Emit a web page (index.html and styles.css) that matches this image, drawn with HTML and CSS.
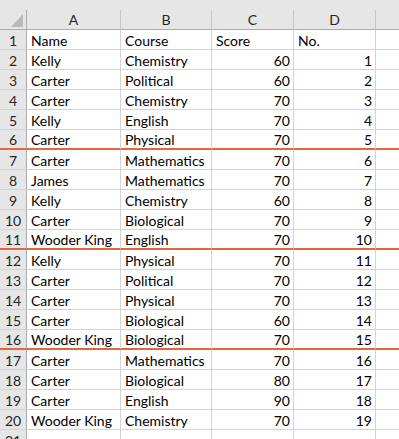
FILE: index.html
```html
<!DOCTYPE html>
<html>
<head>
<meta charset="utf-8">
<link rel="stylesheet" href="styles.css">
</head>
<body>
<div class="sheet">
  <div class="topbar"></div>
  <div class="grid">
    <div class="ch corner"><span class="tri"></span></div>
    <div class="ch">A</div>
    <div class="ch">B</div>
    <div class="ch">C</div>
    <div class="ch">D</div>
    <div class="ch last"></div>
  </div>
  <div id="rows"></div>
</div>
<script src="app.js"></script>
</body>
</html>
```

FILE: app.js
```js
const data = [
  ["Name","Course","Score","No."],
  ["Kelly","Chemistry",60,1],
  ["Carter","Political",60,2],
  ["Carter","Chemistry",70,3],
  ["Kelly","English",70,4],
  ["Carter","Physical",70,5],
  ["Carter","Mathematics",70,6],
  ["James","Mathematics",70,7],
  ["Kelly","Chemistry",60,8],
  ["Carter","Biological",70,9],
  ["Wooder King","English",70,10],
  ["Kelly","Physical",70,11],
  ["Carter","Political",70,12],
  ["Carter","Physical",70,13],
  ["Carter","Biological",60,14],
  ["Wooder King","Biological",70,15],
  ["Carter","Mathematics",70,16],
  ["Carter","Biological",80,17],
  ["Carter","English",90,18],
  ["Wooder King","Chemistry",70,19],
  ["","","",""]
];
const root = document.getElementById("rows");
data.forEach((r, i) => {
  const row = document.createElement("div");
  row.className = "grid row" + ([6,11,16].includes(i+1) ? " sep" : "");
  const cells = [String(i+1)].concat(r).concat([""]);
  cells.forEach((v, j) => {
    const c = document.createElement("div");
    let cls = "cell";
    if (j === 0) cls += " rh";
    else if (j === 5) cls += " last";
    else if (typeof v === "number") cls += " num";
    c.className = cls;
    c.textContent = v;
    row.appendChild(c);
  });
  root.appendChild(row);
});
```

FILE: styles.css
```css
html, body {
  margin: 0;
  padding: 0;
  background: #fff;
}
.sheet {
  width: 399px;
  height: 439px;
  overflow: hidden;
  font-family: "Lato", "Liberation Sans", sans-serif;
  font-size: 14px;
  color: #000;
}
.topbar {
  height: 10px;
  background: #e6e6e6;
}
.grid {
  display: grid;
  grid-template-columns: 27px 94px 91px 82px 82px 1fr;
}
.ch {
  height: 20px;
  box-sizing: border-box;
  background: #e6e6e6;
  border-right: 1px solid #c6c6c6;
  border-bottom: 1px solid #ababab;
  text-align: center;
  line-height: 20px;
  color: #262626;
  position: relative;
}
.ch.corner {
  border-right-color: #ababab;
}
.ch.last {
  border-right: none;
}
.tri {
  position: absolute;
  right: 3px;
  bottom: 2px;
  width: 0;
  height: 0;
  border-left: 12px solid transparent;
  border-bottom: 13px solid #b9b9b9;
}
.cell {
  height: 20px;
  box-sizing: border-box;
  border-right: 1px solid #d4d4d4;
  border-bottom: 1px solid #d4d4d4;
  padding: 1px 3px 0 4px;
  line-height: 19px;
  white-space: nowrap;
  overflow: hidden;
}
.cell.rh {
  background: #e6e6e6;
  border-right-color: #ababab;
  text-align: center;
  padding: 1px 0 0;
  color: #262626;
}
.cell.num {
  text-align: right;
}
.cell.last {
  border-right: none;
}
.row.sep .cell {
  border-bottom: 2px solid #e4663f;
  line-height: 18px;
}
```
